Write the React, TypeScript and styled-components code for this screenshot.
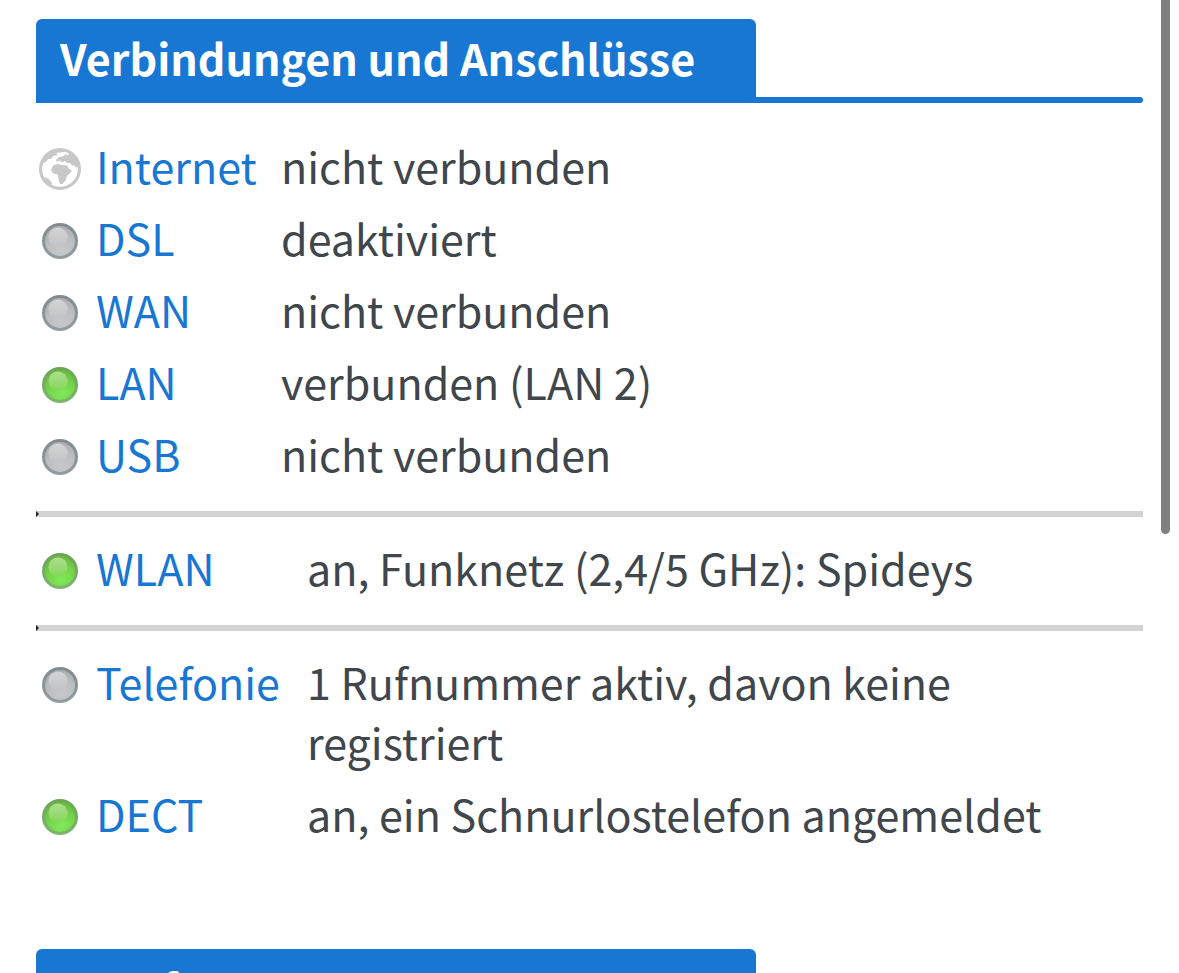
import React from "react";
import styled, { createGlobalStyle } from "styled-components";

const Global = createGlobalStyle`
  *, *::before, *::after { box-sizing: border-box; }
  html, body { margin: 0; background: #fff; }
  html { height: 100%; overflow: hidden; }
  body {
    height: 100%;
    overflow: hidden;
    color: #3f464c;
    font-family: "Noto Sans CJK SC", "Noto Sans", sans-serif;
    font-size: 43px;
    line-height: 60px;
  }
  #root { height: 100%; }
`;

const Page = styled.div`
  position: relative;
  height: 100%;
  overflow: hidden;
`;

const Content = styled.main`
  padding: 19px 36px 0;
`;

const Scrollbar = styled.div`
  position: absolute;
  top: -8px;
  right: 9px;
  width: 9px;
  height: 542px;
  border-radius: 5px;
  background: #808080;
`;

const Section = styled.section`
  margin-bottom: 96px;
`;

const SectionHeader = styled.header`
  &::after {
    content: "";
    display: block;
    height: 6px;
    border-radius: 0 3px 3px 0;
    background: #1877d2;
  }
`;

const Title = styled.h2`
  width: 65%;
  margin: 0;
  padding: 8px 24px 10px;
  border-radius: 6px 6px 0 0;
  background: #1877d2;
  color: #fff;
  font-size: 43px;
  font-weight: 700;
  line-height: 60px;
  white-space: nowrap;
`;

const Groups = styled.div`
  padding-top: 30px;
`;

const Divider = styled.hr`
  height: 6px;
  margin: 18px 0;
  border: 0;
  background: #d3d3d3;

  &::before {
    content: "";
    display: block;
    width: 3px;
    height: 6px;
    background: #222;
    clip-path: polygon(0 0, 100% 50%, 0 100%);
  }
`;

const StatusTable = styled.table`
  width: 100%;
  border-collapse: collapse;
`;

const IconCell = styled.td`
  width: 60px;
  padding: 6px 0;
  vertical-align: top;

  svg {
    display: block;
    width: 48px;
    height: 60px;
  }
`;

const NameCell = styled.th<{ $wide: boolean }>`
  width: ${(p) => (p.$wide ? 211 : 185)}px;
  padding: 2px 0 10px;
  font-weight: 400;
  text-align: left;
  vertical-align: top;
`;

const ValueCell = styled.td`
  padding: 2px 0 10px;
  vertical-align: top;
`;

const Link = styled.a`
  color: #1877d2;
  text-decoration: none;
`;

const GradientDefs = styled.svg`
  display: block;
  width: 0;
  height: 0;
`;

type State = "globe" | "on" | "off";

function LampGradients() {
  return (
    <GradientDefs aria-hidden="true">
      <defs>
        <linearGradient id="rim-on" x1="0" y1="0" x2="0" y2="1">
          <stop offset="0" stopColor="#68a552" />
          <stop offset="1" stopColor="#7fb573" />
        </linearGradient>
        <radialGradient id="body-on" cx="0.55" cy="0.8" r="0.75">
          <stop offset="0" stopColor="#80ea58" />
          <stop offset="0.6" stopColor="#76d44a" />
          <stop offset="1" stopColor="#6cbd41" />
        </radialGradient>
        <linearGradient id="shine-on" x1="0" y1="0" x2="0" y2="1">
          <stop offset="0" stopColor="#b0dc8e" />
          <stop offset="1" stopColor="#82d85a" />
        </linearGradient>
        <linearGradient id="rim-off" x1="0" y1="0" x2="0" y2="1">
          <stop offset="0" stopColor="#7f8b91" />
          <stop offset="1" stopColor="#929ca1" />
        </linearGradient>
        <radialGradient id="body-off" cx="0.55" cy="0.8" r="0.75">
          <stop offset="0" stopColor="#c8c8ca" />
          <stop offset="0.6" stopColor="#bebfc1" />
          <stop offset="1" stopColor="#acaeb0" />
        </radialGradient>
        <linearGradient id="shine-off" x1="0" y1="0" x2="0" y2="1">
          <stop offset="0" stopColor="#d4d4d4" />
          <stop offset="1" stopColor="#c2c3c4" />
        </linearGradient>
      </defs>
    </GradientDefs>
  );
}

function Lamp({ on }: { on: boolean }) {
  const k = on ? "on" : "off";
  return (
    <svg viewBox="0 0 48 60" aria-hidden="true">
      <circle cx="24" cy="30" r="18" fill={`url(#rim-${k})`} />
      <circle cx="24" cy="30" r="15" fill={`url(#body-${k})`} />
      <circle cx="22" cy="26" r="9.5" fill={`url(#shine-${k})`} />
    </svg>
  );
}

function Globe() {
  return (
    <svg viewBox="0 0 48 60" aria-hidden="true" fill="#c8c8c8">
      <circle cx="24" cy="30" r="19.4" fill="none" stroke="#c8c8c8" strokeWidth="3.2" />
      <path d="M9 18 L15 12 L22 10 L31 11 L28 13 L20 14 L22 16 L17 17 L15 20 L12 20 L10 23 L7 24 Z" />
      <path d="M20 21 L23 18 L27 17.5 L29 15.5 L33 16 L32 12.5 L37 15 L41 21 L43 28 L40 28.5 L38 26 L36 26.5 L34 24 L31 24 L29 22 L26 23.5 L24 21.5 L21 23 Z" />
      <path d="M17 26.5 L22 25 L26 26 L31 26.5 L33 30 L36 31.5 L34 34 L31 37 L30 41 L26.5 45 L24 45 L22.5 40 L22 35.5 L17 34.5 L15 31 Z" />
      <path d="M9 38 L13 40 L16 44 L15 46 L10 42 Z" />
    </svg>
  );
}

interface Item {
  name: string;
  value: string;
  state: State;
}

const groups: { wide: boolean; items: Item[] }[] = [
  {
    wide: false,
    items: [
      { name: "Internet", value: "nicht verbunden", state: "globe" },
      { name: "DSL", value: "deaktiviert", state: "off" },
      { name: "WAN", value: "nicht verbunden", state: "off" },
      { name: "LAN", value: "verbunden (LAN 2)", state: "on" },
      { name: "USB", value: "nicht verbunden", state: "off" },
    ],
  },
  {
    wide: true,
    items: [{ name: "WLAN", value: "an, Funknetz (2,4/5 GHz): Spideys", state: "on" }],
  },
  {
    wide: true,
    items: [
      { name: "Telefonie", value: "1 Rufnummer aktiv, davon keine registriert", state: "off" },
      { name: "DECT", value: "an, ein Schnurlostelefon angemeldet", state: "on" },
    ],
  },
];

export default function App() {
  return (
    <Page>
      <Global />
      <LampGradients />
      <Content>
        <Section>
          <SectionHeader>
            <Title>Verbindungen und Anschlüsse</Title>
          </SectionHeader>
          <Groups>
            {groups.map((g, i) => (
              <React.Fragment key={i}>
                {i > 0 && <Divider />}
                <StatusTable>
                  <tbody>
                    {g.items.map((it) => (
                      <tr key={it.name}>
                        <IconCell>
                          {it.state === "globe" ? <Globe /> : <Lamp on={it.state === "on"} />}
                        </IconCell>
                        <NameCell scope="row" $wide={g.wide}>
                          <Link href="#">{it.name}</Link>
                        </NameCell>
                        <ValueCell>{it.value}</ValueCell>
                      </tr>
                    ))}
                  </tbody>
                </StatusTable>
              </React.Fragment>
            ))}
          </Groups>
        </Section>
        <Section>
          <SectionHeader>
            <Title>Anrufe</Title>
          </SectionHeader>
        </Section>
      </Content>
      <Scrollbar />
    </Page>
  );
}
